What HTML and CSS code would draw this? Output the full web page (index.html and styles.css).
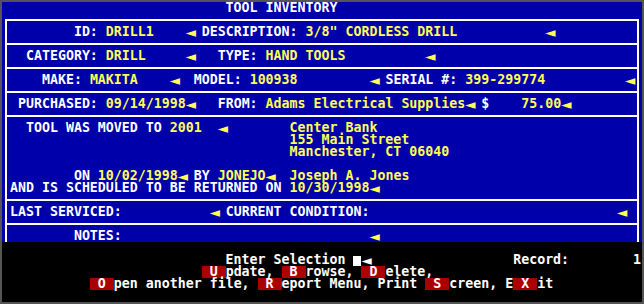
FILE: index.html
```html
<!DOCTYPE html>
<html lang="en">
<head>
  <meta charset="UTF-8" />
  <title>Tool Inventory</title>
  <link rel="stylesheet" href="styles.css">
</head>
<body>

  <div class="screen">
    <div class="form">
      <div class="ln">                            TOOL INVENTORY</div>

      <div class="frame">
        <div class="sect">
          <div class="ln">        ID: <span class="v">DRILL1    <span class="p">◄</span></span> DESCRIPTION: <span class="v">3/8" CORDLESS DRILL           <span class="p">◄</span></span></div>
        </div>
        <div class="sect">
          <div class="ln">  CATEGORY: <span class="v">DRILL     <span class="p">◄</span></span>   TYPE: <span class="v">HAND TOOLS          <span class="p">◄</span></span></div>
        </div>
        <div class="sect">
          <div class="ln">    MAKE: <span class="v">MAKITA    <span class="p">◄</span></span>  MODEL: <span class="v">100938         <span class="p">◄</span></span> SERIAL #: <span class="v">399-299774          <span class="p">◄</span></span></div>
        </div>
        <div class="sect">
          <div class="ln"> PURCHASED: <span class="v">09/14/1998<span class="p">◄</span></span>   FROM: <span class="v">Adams Electrical Supplies<span class="p">◄</span></span> $<span class="v">    75.00<span class="p">◄</span></span></div>
        </div>
        <div class="sect">
          <div class="ln">  TOOL WAS MOVED TO <span class="v">2001  <span class="p">◄</span></span>        <span class="v">Center Bank</span></div>
          <div class="ln">                                   <span class="v">155 Main Street</span></div>
          <div class="ln">                                   <span class="v">Manchester, CT 06040</span></div>
          <div class="ln"></div>
          <div class="ln">        ON <span class="v">10/02/1998<span class="p">◄</span></span> BY <span class="v">JONEJO<span class="p">◄</span></span>  <span class="v">Joseph A. Jones</span></div>
          <div class="ln">AND IS SCHEDULED TO BE RETURNED ON <span class="v">10/30/1998<span class="p">◄</span></span></div>
        </div>
        <div class="sect">
          <div class="ln">LAST SERVICED: <span class="v">          <span class="p">◄</span></span> CURRENT CONDITION: <span class="v">                              <span class="p">◄</span></span></div>
        </div>
        <div class="sect">
          <div class="ln">        NOTES: <span class="v">                              <span class="p">◄</span></span></div>
        </div>
      </div>
    </div>

    <div class="menu">
      <div class="ln">                            Enter Selection <span class="cursor"></span><span class="p">◄</span>                  Record:        1</div>
      <div class="ln">                         <span class="key"> U </span>pdate, <span class="key"> B </span>rowse, <span class="key"> D </span>elete,</div>
      <div class="ln">           <span class="key"> O </span>pen another file, <span class="key"> R </span>eport Menu, Print <span class="key"> S </span>creen, E<span class="key"> X </span>it</div>
    </div>
  </div>

</body>
</html>
```

FILE: styles.css
```css
body, html {
  margin: 0;
  padding: 0;
  background: black;
}

.screen {
  width: 640px;
  height: 300px;
  border: 2px solid #555;
  background: black;
  color: white;
  font-family: "DejaVu Sans Mono", monospace;
  font-weight: bold;
  font-size: 13.288px;
  line-height: 12px;
  overflow: hidden;
}

.form {
  background: #0000aa;
  height: 240px;
  overflow: hidden;
}

.ln {
  height: 12px;
  white-space: pre;
}

.v { color: #ffff55; }

/* field pointer, a bit larger than the text but still one cell wide */
.p {
  display: inline-block;
  width: 8px;
  height: 12px;
  font-size: 17px;
  line-height: 12px;
  vertical-align: top;
  overflow: visible;
}

.frame {
  margin: 5px 3px 0 3px;
  border: 2px solid white;
  border-bottom: none;
}

.sect {
  padding: 5px 0 5px 3px;
  border-bottom: 2px solid white;
}

.sect:last-child {
  border-bottom: none;
  padding-bottom: 0;
}

.menu {
  padding-top: 12px;
}

.key {
  display: inline-block;
  height: 12px;
  vertical-align: top;
  background: #aa0000;
}

.cursor {
  display: inline-block;
  width: 8px;
  height: 10px;
  margin-top: 2px;
  vertical-align: top;
  background: white;
}
```
